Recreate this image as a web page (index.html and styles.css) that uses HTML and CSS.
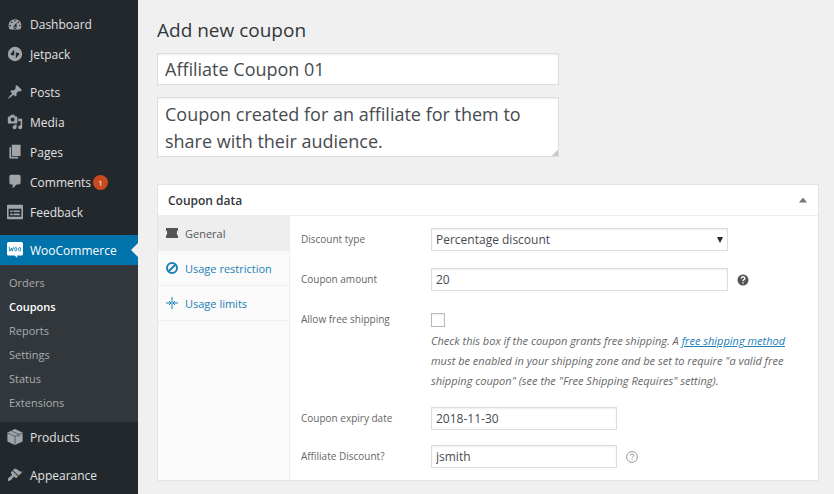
FILE: index.html
```html
<!DOCTYPE html>
<html lang="en">

<head>
  <meta charset="UTF-8">
  <meta name="viewport" content="width=device-width, initial-scale=1.0">
  <title>Add new coupon</title>
  <link rel="stylesheet" href="styles.css">
</head>

<body>

  <!-- Admin menu -->
  <nav class="sidebar">
    <ul class="menu">
      <li>
        <a href="#" class="menu-link">
          <svg class="menu-icon" viewBox="0 0 20 20"><path d="M3.76 17h12.48c1.1-1.37 1.76-3.11 1.76-5 0-4.42-3.58-8-8-8s-8 3.58-8 8c0 1.89.66 3.63 1.76 5zM10 5c.55 0 1 .45 1 1s-.45 1-1 1-1-.45-1-1 .45-1 1-1zM6 7c.55 0 1 .45 1 1s-.45 1-1 1-1-.45-1-1 .45-1 1-1zm8 0c.55 0 1 .45 1 1s-.45 1-1 1-1-.45-1-1 .45-1 1-1zm-5.37 5.55L12 8v6c0 1.1-.9 2-2 2s-2-.9-2-2c0-.57.24-1.08.63-1.45zM4 11c.55 0 1 .45 1 1s-.45 1-1 1-1-.45-1-1 .45-1 1-1zm12 0c.55 0 1 .45 1 1s-.45 1-1 1-1-.45-1-1 .45-1 1-1zm-5 3c0-.55-.45-1-1-1s-1 .45-1 1 .45 1 1 1 1-.45 1-1z"/></svg>
          Dashboard
        </a>
      </li>
      <li>
        <a href="#" class="menu-link">
          <svg class="menu-icon" viewBox="0 0 20 20"><circle cx="10" cy="10" r="9"/><path class="cut" d="M9 4.5v7.5l-3.8-.9c-.7-.2-.9-.8-.5-1.4zM11 15.500V8l3.800.9c.7.2.9.8.5 1.400z"/></svg>
          Jetpack
        </a>
      </li>
      <li class="separator"></li>
      <li>
        <a href="#" class="menu-link">
          <svg class="menu-icon" viewBox="0 0 20 20"><path d="M10.44 3.02l1.82-1.82 6.36 6.35-1.83 1.82c-1.05-.68-2.48-.57-3.41.36l-.75.75c-.92.93-1.04 2.35-.35 3.41l-1.83 1.82-2.41-2.41-2.8 2.79c-.42.42-3.38 2.71-3.8 2.29s1.86-3.39 2.28-3.81l2.79-2.79L4.1 9.36l1.83-1.82c1.05.69 2.48.57 3.4-.36l.75-.75c.93-.92 1.05-2.35.36-3.41z"/></svg>
          Posts
        </a>
      </li>
      <li>
        <a href="#" class="menu-link">
          <svg class="menu-icon" viewBox="0 0 20 20"><path d="M13 11V4c0-.55-.45-1-1-1h-1.67L9 1H5L3.67 3H2c-.55 0-1 .45-1 1v7c0 .55.45 1 1 1h10c.55 0 1-.45 1-1zM7 4.5c1.38 0 2.5 1.12 2.5 2.5S8.38 9.5 7 9.5 4.5 8.38 4.5 7 5.62 4.5 7 4.5zM14 6h5v10.5c0 1.38-1.12 2.5-2.5 2.5S14 17.88 14 16.5s1.12-2.5 2.5-2.5c.17 0 .34.02.5.05V9h-3V6zm-4 8.05V13h2v3.5c0 1.38-1.12 2.5-2.5 2.5S7 17.88 7 16.5 8.12 14 9.5 14c.17 0 .34.02.5.05z"/></svg>
          Media
        </a>
      </li>
      <li>
        <a href="#" class="menu-link">
          <svg class="menu-icon" viewBox="0 0 20 20"><path d="M6 15V1h11v14H6zm-1 1h9v2H3V4h2v12z"/></svg>
          Pages
        </a>
      </li>
      <li>
        <a href="#" class="menu-link">
          <svg class="menu-icon" viewBox="0 0 20 20"><path d="M5 1h10c1.1 0 2 .9 2 2v8c0 1.1-.9 2-2 2h-3l-5 5v-5H5c-1.1 0-2-.9-2-2V3c0-1.1.9-2 2-2z"/></svg>
          Comments <span class="count">1</span>
        </a>
      </li>
      <li>
        <a href="#" class="menu-link">
          <svg class="menu-icon" viewBox="0 0 20 20"><path d="M1 1h18c.55 0 1 .45 1 1v16c0 .55-.45 1-1 1H1c-.55 0-1-.45-1-1V2c0-.55.45-1 1-1zm17 15V6H2v10h16zM4 8v2h3V8H4zm4 0v2h8V8H8zm-4 4v2h3v-2H4zm4 0v2h8v-2H8z"/></svg>
          Feedback
        </a>
      </li>
      <li class="separator"></li>
      <li>
        <a href="#" class="menu-link current">
          <svg class="menu-icon" viewBox="0 0 20 20"><path d="M2 0h16c1.1 0 2 .9 2 2v13c0 1.1-.9 2-2 2h-5.500l.8 3-4-3H2c-1.100 0-2-.9-2-2V2c0-1.100.9-2 2-2z"/><path class="woo" d="M2.500 6l1.200 5.500 2-4 1 4 1.500-5.500"/><ellipse class="woo" cx="11" cy="9" rx="1.400" ry="2.200"/><ellipse class="woo" cx="15.800" cy="9" rx="1.400" ry="2.200"/></svg>
          WooCommerce
        </a>
        <ul class="submenu">
          <li><a href="#">Orders</a></li>
          <li><a href="#" class="active">Coupons</a></li>
          <li><a href="#">Reports</a></li>
          <li><a href="#">Settings</a></li>
          <li><a href="#">Status</a></li>
          <li><a href="#">Extensions</a></li>
        </ul>
      </li>
      <li>
        <a href="#" class="menu-link">
          <svg class="menu-icon" viewBox="0 0 20 20"><path d="M10 0l9.500 4.500v11L10 20 .5 15.500v-11z"/><path class="seam" d="M1 5.200l9 4 9-4M10 9.200V19M5.500 2.500l9 4v3.500"/></svg>
          Products
        </a>
      </li>
      <li class="separator"></li>
      <li>
        <a href="#" class="menu-link">
          <svg class="menu-icon" viewBox="0 0 20 20"><path d="M14.48 11.06L7.41 3.99l1.5-1.5c.5-.56 2.3-.47 3.51.32 1.21.8 1.43 1.28 2.91 2.1 1.18.64 2.45 1.26 4.45.85zm-.71.71L6.7 4.7 4.93 6.47c-.39.39-.39 1.02 0 1.41l1.06 1.06c.39.39.39 1.03 0 1.42-.6.6-1.43 1.11-2.21 1.69-.35.26-.7.53-1.01.84C1.43 14.23.4 16.08 1.4 17.07c.99 1 2.84-.03 4.18-1.36.31-.31.58-.66.85-1.02.57-.78 1.08-1.61 1.69-2.21.39-.39 1.02-.39 1.41 0l1.06 1.06c.39.39 1.02.39 1.41 0z"/></svg>
          Appearance
        </a>
      </li>
    </ul>
  </nav>

  <main class="content">
    <h1>Add new coupon</h1>
    <form id="couponForm">
      <input type="text" class="title-input" aria-label="Coupon code" value="Affiliate Coupon 01">
      <textarea class="description-input" aria-label="Description">Coupon created for an affiliate for them to share with their audience.</textarea>

      <!-- Coupon data box -->
      <section class="postbox">
        <header class="postbox-header">
          <h2>Coupon data</h2>
          <button type="button" class="toggle" aria-label="Toggle panel"></button>
        </header>

        <div class="postbox-body">
          <ul class="tabs">
            <li>
              <a href="#" class="tab active">
                <svg class="tab-icon" viewBox="0 0 12 12"><path d="M0 1h12v2.5c-1.5.3-1.5 4.7 0 5V11H0V8.5c1.5-.3 1.5-4.7 0-5z"/></svg>
                General
              </a>
            </li>
            <li>
              <a href="#" class="tab">
                <svg class="tab-icon line" viewBox="0 0 12 12"><circle cx="6" cy="6" r="5"/><path d="M2.700 9.300l6.600-6.600"/></svg>
                Usage restriction
              </a>
            </li>
            <li>
              <a href="#" class="tab">
                <svg class="tab-icon thin" viewBox="0 0 12 12"><path d="M6 0v12M0 6h4.500M12 6H7.500M3 4l2 2-2 2M9 4L7 6l2 2"/></svg>
                Usage limits
              </a>
            </li>
          </ul>

          <div class="fields">
            <div class="group">
              <div class="field">
                <label for="discountType">Discount type</label>
                <div class="select-wrap">
                  <select id="discountType">
                    <option>Percentage discount</option>
                    <option>Fixed cart discount</option>
                    <option>Fixed product discount</option>
                  </select>
                </div>
              </div>
              <div class="field">
                <label for="couponAmount">Coupon amount</label>
                <input type="text" id="couponAmount" value="20">
                <svg class="help" viewBox="0 0 12 12"><circle cx="6" cy="6" r="5.500"/><path class="mark" d="M4.200 4.600c0-2.400 3.600-2.300 3.600-.2 0 1.200-1.700 1.200-1.700 2.500M6.100 8.200v1.300"/></svg>
              </div>
              <div class="field">
                <label for="freeShipping">Allow free shipping</label>
                <input type="checkbox" id="freeShipping">
                <p class="hint">Check this box if the coupon grants free shipping. A <a href="#">free shipping method</a> must be enabled in your shipping zone and be set to require "a valid free shipping coupon" (see the "Free Shipping Requires" setting).</p>
              </div>
            </div>
            <div class="group narrow">
              <div class="field">
                <label for="expiryDate">Coupon expiry date</label>
                <input type="text" id="expiryDate" value="2018-11-30">
              </div>
              <div class="field">
                <label for="affiliate">Affiliate Discount?</label>
                <input type="text" id="affiliate" value="jsmith">
                <svg class="help outline" viewBox="0 0 12 12"><circle cx="6" cy="6" r="5.400"/><path class="mark" d="M4.200 4.700c0-2.300 3.600-2.200 3.600-.2 0 1.200-1.700 1.200-1.700 2.400M6.100 8.100v1.200"/></svg>
              </div>
            </div>
          </div>
        </div>
      </section>
    </form>
  </main>

</body>

</html>
```

FILE: styles.css
```css
/* Global Styles */
* {
  box-sizing: border-box;
}

body {
  margin: 0;
  min-height: 100vh;
  display: flex;
  background-color: #f0f0f0;
  color: #444;
  font-family: 'Open Sans', 'Noto Sans', sans-serif;
  font-size: 12px;
}

ul {
  list-style: none;
  margin: 0;
  padding: 0;
}

a {
  color: #1a80b6;
}

input,
select,
textarea {
  margin: 0;
  border: 1px solid #ddd;
  border-radius: 0;
  background-color: #fff;
  color: #464b50;
  font-family: inherit;
  box-shadow: inset 0 1px 2px rgba(0, 0, 0, 0.07);
}

/* Sidebar */
.sidebar {
  flex: 0 0 138px;
  padding-top: 9px;
  background-color: #23282d;
}

.separator {
  height: 8px;
}

.menu-link {
  display: flex;
  align-items: center;
  gap: 7px;
  height: 30px;
  padding-left: 7px;
  color: #e0e1e2;
  text-decoration: none;
}

.menu-icon {
  width: 16px;
  height: 16px;
  fill: #a0a5aa;
}

.menu-icon .cut {
  fill: #23282d;
}

.menu-icon .seam {
  fill: none;
  stroke: #4a4f54;
  stroke-width: 1;
}

.menu-icon .woo {
  fill: none;
  stroke: #0073aa;
  stroke-width: 1;
}

.count {
  width: 15px;
  height: 15px;
  margin-left: -5px;
  border-radius: 50%;
  background-color: #ca4a1f;
  color: #fff;
  font-size: 8px;
  line-height: 15px;
  text-align: center;
}

.menu-link.current {
  position: relative;
  background-color: #0073aa;
  color: #fff;
}

.menu-link.current .menu-icon {
  fill: #fff;
}

.menu-link.current::after {
  content: '';
  position: absolute;
  right: 0;
  top: 8px;
  border: 7px solid transparent;
  border-left: none;
  border-right-color: #f0f0f0;
}

.submenu {
  padding: 6px 0 7px;
  background-color: #32373c;
}

.submenu a {
  display: block;
  padding-left: 9px;
  color: #a9adb1;
  font-size: 11px;
  line-height: 24px;
  text-decoration: none;
}

.submenu .active {
  color: #fff;
  font-weight: 600;
}

/* Content */
.content {
  flex: 1;
  min-width: 0;
  padding: 17px 15px 13px 19px;
}

h1 {
  margin: 0 0 10px;
  color: #32373c;
  font-size: 19px;
  font-weight: 400;
  line-height: 26px;
}

.title-input,
.description-input {
  display: block;
  width: 100%;
  max-width: 402px;
  padding: 0 7px;
  font-size: 18px;
}

.title-input {
  height: 32px;
  margin-bottom: 12px;
}

.description-input {
  height: 60px;
  margin-bottom: 27px;
  padding-top: 3px;
  line-height: 27px;
  overflow: hidden;
  resize: vertical;
}

.description-input::-webkit-resizer {
  background: linear-gradient(135deg, transparent 80%, #ccc 80%);
}

/* Coupon data box */
.postbox {
  border: 1px solid #e5e5e5;
  background-color: #fff;
}

.postbox-header {
  display: flex;
  align-items: center;
  justify-content: space-between;
  height: 31px;
  padding: 0 11px 0 10px;
  border-bottom: 1px solid #eee;
}

h2 {
  margin: 0;
  color: #32373c;
  font-size: 12px;
  font-weight: 600;
}

.toggle {
  width: 8px;
  height: 5px;
  padding: 0;
  border: none;
  background-color: #72777c;
  clip-path: polygon(50% 0, 100% 100%, 0 100%);
}

.postbox-body {
  display: flex;
}

/* Tabs */
.tabs {
  flex: 0 0 132px;
  border-right: 1px solid #eee;
  background-color: #fafafa;
}

.tab {
  display: flex;
  align-items: center;
  gap: 7px;
  height: 35px;
  padding-left: 8px;
  border-bottom: 1px solid #eee;
  font-size: 11px;
  text-decoration: none;
}

.tab.active {
  background-color: #eee;
  color: #555;
}

.tab-icon {
  width: 12px;
  height: 12px;
  fill: currentColor;
}

.tab-icon.line,
.tab-icon.thin {
  fill: none;
  stroke: currentColor;
  stroke-width: 2;
}

.tab-icon.thin {
  stroke-width: 1;
}

/* Fields */
.fields {
  flex: 1;
  min-width: 0;
  padding: 12px 11px;
}

.group {
  display: grid;
  gap: 17px;
}

.group.narrow {
  gap: 15px;
  margin-top: 16px;
}

.field {
  display: grid;
  grid-template-columns: 130px minmax(0, 297px) 1fr;
  align-items: center;
}

.narrow .field {
  grid-template-columns: 130px minmax(0, 186px) 1fr;
}

.field label {
  color: #666;
  font-size: 10px;
  line-height: 23px;
}

.field input[type="text"],
.field select {
  width: 100%;
  height: 23px;
  padding: 0 4px;
  font-size: 12px;
}

.select-wrap {
  position: relative;
}

.field select {
  appearance: none;
}

.select-wrap::after {
  content: '';
  position: absolute;
  right: 5px;
  top: 9px;
  border: 3px solid transparent;
  border-top: 6px solid #23282d;
  border-bottom: none;
  pointer-events: none;
}

input[type="checkbox"] {
  appearance: none;
  width: 14px;
  height: 14px;
  border-color: #b4b9be;
}

.hint {
  grid-column: 2 / -1;
  margin: 0;
  color: #666;
  font-size: 11px;
  font-style: italic;
  line-height: 20px;
}

.help {
  width: 12px;
  height: 12px;
  margin-left: 9px;
  fill: #555;
}

.help .mark {
  fill: none;
  stroke: #fff;
  stroke-width: 1.4;
}

.help.outline,
.help.outline .mark {
  fill: none;
  stroke: #999;
  stroke-width: 1;
}
```
